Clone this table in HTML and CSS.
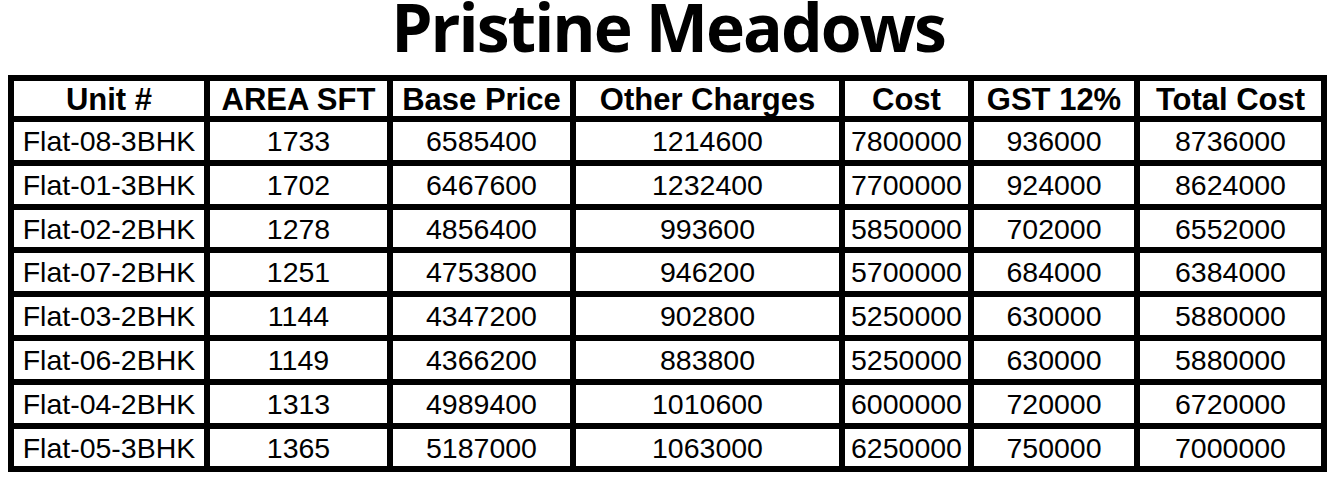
FILE: index.html
```html
<!DOCTYPE html>
<html>
<head>
<meta charset="utf-8">
<title>Pristine Meadows</title>
<link rel="stylesheet" href="styles.css">
</head>
<body>
<h1 class="title">Pristine Meadows</h1>
<table class="price-table">
  <colgroup>
    <col class="c-unit"><col class="c-area"><col class="c-base"><col class="c-other"><col class="c-cost"><col class="c-gst"><col class="c-total">
  </colgroup>
  <thead>
    <tr><th>Unit #</th><th>AREA SFT</th><th>Base Price</th><th>Other Charges</th><th>Cost</th><th>GST 12%</th><th>Total Cost</th></tr>
  </thead>
  <tbody>
    <tr><td>Flat-08-3BHK</td><td>1733</td><td>6585400</td><td>1214600</td><td>7800000</td><td>936000</td><td>8736000</td></tr>
    <tr><td>Flat-01-3BHK</td><td>1702</td><td>6467600</td><td>1232400</td><td>7700000</td><td>924000</td><td>8624000</td></tr>
    <tr><td>Flat-02-2BHK</td><td>1278</td><td>4856400</td><td>993600</td><td>5850000</td><td>702000</td><td>6552000</td></tr>
    <tr><td>Flat-07-2BHK</td><td>1251</td><td>4753800</td><td>946200</td><td>5700000</td><td>684000</td><td>6384000</td></tr>
    <tr><td>Flat-03-2BHK</td><td>1144</td><td>4347200</td><td>902800</td><td>5250000</td><td>630000</td><td>5880000</td></tr>
    <tr><td>Flat-06-2BHK</td><td>1149</td><td>4366200</td><td>883800</td><td>5250000</td><td>630000</td><td>5880000</td></tr>
    <tr><td>Flat-04-2BHK</td><td>1313</td><td>4989400</td><td>1010600</td><td>6000000</td><td>720000</td><td>6720000</td></tr>
    <tr><td>Flat-05-3BHK</td><td>1365</td><td>5187000</td><td>1063000</td><td>6250000</td><td>750000</td><td>7000000</td></tr>
  </tbody>
</table>
</body>
</html>
```

FILE: styles.css
```css
html, body {
  margin: 0;
  padding: 0;
  background: #ffffff;
}
body {
  padding: 0 8px;
  color: #000;
}
.title {
  margin: 0 0 23px 0;
  height: 52px;
  line-height: 52px;
  text-align: center;
  font-family: "Open Sans", "Noto Sans", sans-serif;
  font-weight: 700;
  font-size: 66px;
  letter-spacing: -2px;
  color: #000;
}
.price-table {
  border-collapse: separate;
  border-spacing: 6px;
  background: #000;
  width: 1319px;
  table-layout: fixed;
  font-family: "Liberation Sans", Arial, sans-serif;
}
.c-unit { width: 190px; }
.c-area { width: 177px; }
.c-base { width: 177px; }
.c-other { width: 263px; }
.c-cost { width: 123px; }
.c-gst { width: 160px; }
.c-total { width: 181px; }
.price-table th,
.price-table td {
  background: #fff;
  padding: 0;
  text-align: center;
  vertical-align: middle;
  white-space: nowrap;
  color: #000;
}
.price-table th {
  height: 33px;
  padding-top: 2px;
  font-size: 31px;
  font-weight: 700;
  line-height: 33px;
}
.price-table td {
  height: 35.8px;
  padding-top: 2px;
  font-size: 28.5px;
  font-weight: 400;
  line-height: 35.8px;
}
```
